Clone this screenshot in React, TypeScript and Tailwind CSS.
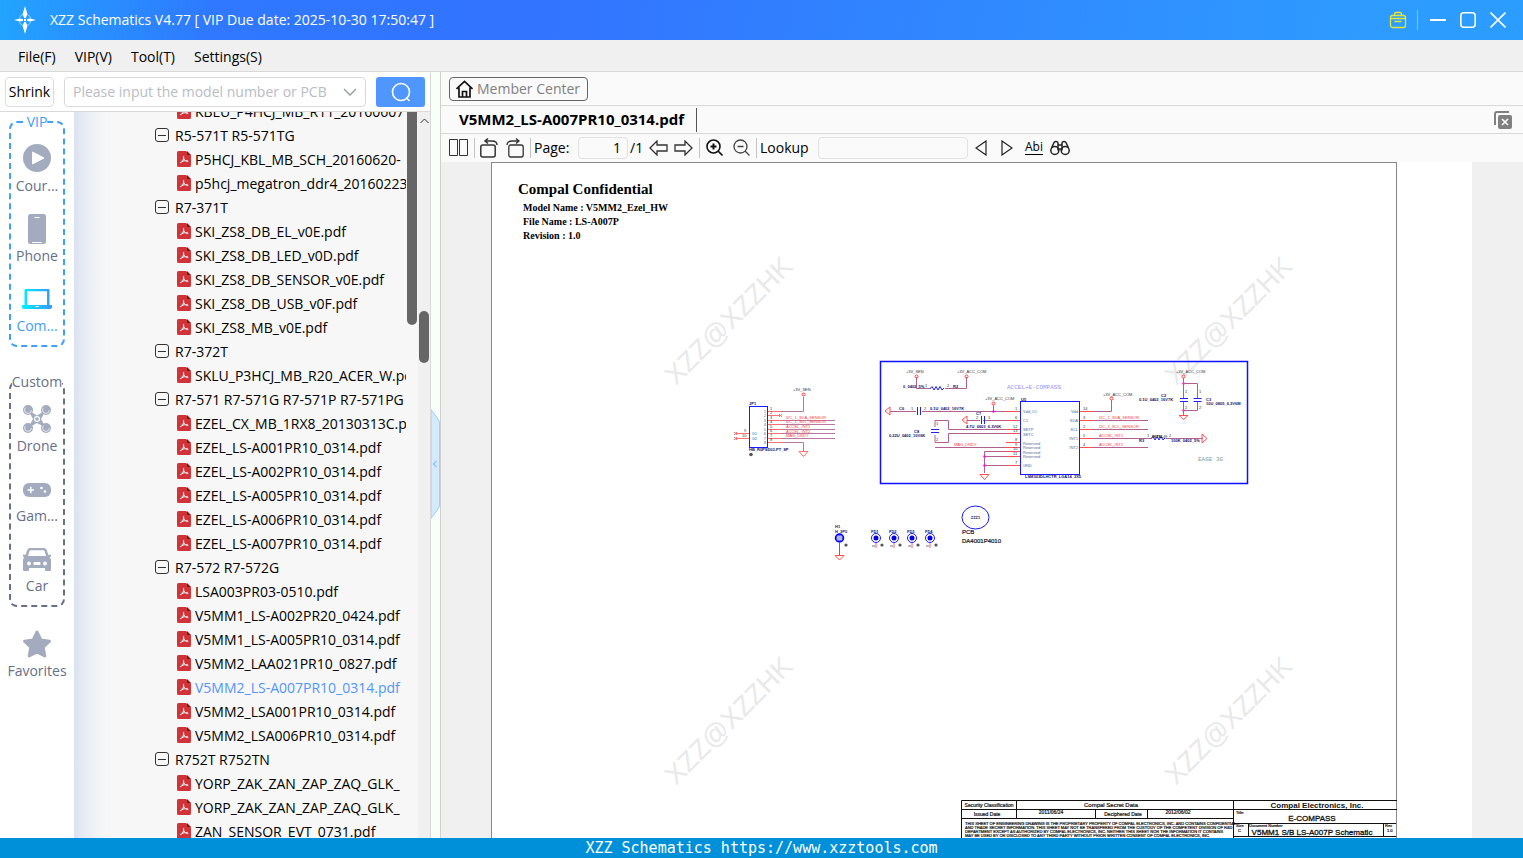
import React from 'react';

type TreeRow = { kind: 'group' | 'file'; label: string; active?: boolean };

const TREE: TreeRow[] = [
  { kind: 'file', label: 'KBLU_P4HCJ_MB_R11_20160607' },
  { kind: 'group', label: 'R5-571T R5-571TG' },
  { kind: 'file', label: 'P5HCJ_KBL_MB_SCH_20160620-' },
  { kind: 'file', label: 'p5hcj_megatron_ddr4_20160223' },
  { kind: 'group', label: 'R7-371T' },
  { kind: 'file', label: 'SKI_ZS8_DB_EL_v0E.pdf' },
  { kind: 'file', label: 'SKI_ZS8_DB_LED_v0D.pdf' },
  { kind: 'file', label: 'SKI_ZS8_DB_SENSOR_v0E.pdf' },
  { kind: 'file', label: 'SKI_ZS8_DB_USB_v0F.pdf' },
  { kind: 'file', label: 'SKI_ZS8_MB_v0E.pdf' },
  { kind: 'group', label: 'R7-372T' },
  { kind: 'file', label: 'SKLU_P3HCJ_MB_R20_ACER_W.pdf' },
  { kind: 'group', label: 'R7-571 R7-571G R7-571P R7-571PG' },
  { kind: 'file', label: 'EZEL_CX_MB_1RX8_20130313C.pdf' },
  { kind: 'file', label: 'EZEL_LS-A001PR10_0314.pdf' },
  { kind: 'file', label: 'EZEL_LS-A002PR10_0314.pdf' },
  { kind: 'file', label: 'EZEL_LS-A005PR10_0314.pdf' },
  { kind: 'file', label: 'EZEL_LS-A006PR10_0314.pdf' },
  { kind: 'file', label: 'EZEL_LS-A007PR10_0314.pdf' },
  { kind: 'group', label: 'R7-572 R7-572G' },
  { kind: 'file', label: 'LSA003PR03-0510.pdf' },
  { kind: 'file', label: 'V5MM1_LS-A002PR20_0424.pdf' },
  { kind: 'file', label: 'V5MM1_LS-A005PR10_0314.pdf' },
  { kind: 'file', label: 'V5MM2_LAA021PR10_0827.pdf' },
  { kind: 'file', label: 'V5MM2_LS-A007PR10_0314.pdf', active: true },
  { kind: 'file', label: 'V5MM2_LSA001PR10_0314.pdf' },
  { kind: 'file', label: 'V5MM2_LSA006PR10_0314.pdf' },
  { kind: 'group', label: 'R752T R752TN' },
  { kind: 'file', label: 'YORP_ZAK_ZAN_ZAP_ZAQ_GLK_' },
  { kind: 'file', label: 'YORP_ZAK_ZAN_ZAP_ZAQ_GLK_' },
  { kind: 'file', label: 'ZAN_SENSOR_EVT_0731.pdf' },
];

const MENUS = ['File(F)', 'VIP(V)', 'Tool(T)', 'Settings(S)'];

/* ---------- icons ---------- */

const Logo = () => (
  <svg width="24" height="30" viewBox="0 0 24 30" fill="#fff">
    <circle cx="12" cy="15" r="6" fill="none" stroke="#fff" strokeOpacity="0.5" strokeDasharray="6 3.4" strokeDashoffset="-1.7" />
    <path d="M12 1l2.4 8-1.6 4h-1.6l-1.6-4z" />
    <path d="M12 29l2.4-8-1.6-4h-1.6l-1.6 4z" />
    <path d="M1 15l6-1.6 3 .8v1.6l-3 .8z" />
    <path d="M23 15l-6-1.6-3 .8v1.6l3 .8z" />
    <circle cx="12" cy="15" r="1.2" />
  </svg>
);

const PdfIcon = () => (
  <svg className="shrink-0" width="14" height="16" viewBox="0 0 14 16">
    <path d="M1.5 0H9l5 4.5v10a1.5 1.5 0 0 1-1.5 1.5h-11A1.5 1.5 0 0 1 0 14.500V1.500A1.500 1.500 0 0 1 1.500 0z" fill="#d13438" />
    <path d="M10 0l4 4h-4z" fill="#8c1014" />
    <path d="M6.700 5.500c.2 3-1 5-3.200 6.200M7 7.800c.7 1.500 2 2.400 3.800 2.700M4.500 10.600c2-1 4-1.200 6.200-.6" fill="none" stroke="#fff" strokeLinecap="round" />
  </svg>
);

const MinusBox = () => (
  <svg className="shrink-0" width="14" height="14" viewBox="0 0 14 14" fill="none" stroke="#333">
    <rect x="0.500" y="0.500" width="13" height="13" rx="2.500" />
    <path d="M3 7.500h8" />
  </svg>
);

const CourseIcon = () => (
  <svg width="32" height="32" viewBox="0 0 32 32">
    <circle cx="16" cy="16" r="14" fill="#a3abbe" />
    <path d="M11.500 10v12l11.500-6z" fill="#fff" stroke="#fff" strokeLinejoin="round" />
  </svg>
);

const PhoneIcon = () => (
  <svg width="32" height="32" viewBox="0 0 32 32">
    <rect x="7" y="2" width="18" height="30" rx="2.500" fill="#a3abbe" />
    <path d="M14 5.500h4M11.500 30.500h9" stroke="#fff" strokeWidth="1.200" strokeLinecap="round" />
  </svg>
);

const LaptopIcon = () => (
  <svg width="32" height="32" viewBox="0 0 32 32">
    <defs>
      <linearGradient id="lap" x1="0" x2="1">
        <stop offset="0" stopColor="#00f0ff" />
        <stop offset="1" stopColor="#3399ff" />
      </linearGradient>
    </defs>
    <path fillRule="evenodd" fill="url(#lap)" d="M4.500 7h23a1 1 0 0 1 1 1v15H31v2a2 2 0 0 1-2 2H3a2 2 0 0 1-2-2v-2h2.500V8a1 1 0 0 1 1-1zM6 9.200V23h20V9.200z" />
    <path d="M14 24.500h4" stroke="#fff" />
  </svg>
);

const DroneIcon = () => (
  <svg width="32" height="32" viewBox="0 0 32 32" fill="#a3abbe">
    <path d="M7 8l9 5.500L25 8l-5 9 5 9-9-5-9 5 5-9z" />
    {[[7, 8], [25, 8], [7, 26], [25, 26]].map(([x, y]) => (
      <g key={`${x}-${y}`}>
        <circle cx={x} cy={y} r="5" />
        <circle cx={x} cy={y} r="3.400" fill="none" stroke="#fff" strokeWidth="0.700" strokeDasharray="13 8" />
      </g>
    ))}
    <circle cx="16" cy="17" r="2.400" fill="none" stroke="#fff" strokeWidth="1.200" />
  </svg>
);

const GameIcon = () => (
  <svg width="32" height="32" viewBox="0 0 32 32">
    <rect x="2" y="11" width="28" height="14" rx="6" fill="#a3abbe" />
    <path d="M6.500 18h6.500M9.800 14.800v6.500" stroke="#fff" strokeWidth="1.600" />
    <circle cx="20.500" cy="16" r="1.300" fill="#fff" />
    <circle cx="24" cy="19.500" r="1.300" fill="#fff" />
  </svg>
);

const CarIcon = () => (
  <svg width="32" height="32" viewBox="0 0 32 32">
    <path d="M9 6h14a3 3 0 0 1 2.700 2l1.800 5 2.500-.5v2l-1.200.7c.8 1 1.200 2 1.200 3V28a1 1 0 0 1-1 1h-4a1 1 0 0 1-1-1v-2H8v2a1 1 0 0 1-1 1H3a1 1 0 0 1-1-1v-9.800c0-1 .4-2 1.200-3L2 14.500v-2l2.500.5 1.800-5A3 3 0 0 1 9 6z" fill="#a3abbe" />
    <path d="M9.500 8.200h13a1 1 0 0 1 1 .7l1.600 5.100H7l1.500-5.100a1 1 0 0 1 1-.7z" fill="#fff" />
    <circle cx="8" cy="21.500" r="1.900" fill="#fff" />
    <circle cx="24" cy="21.500" r="1.900" fill="#fff" />
    <rect x="12.500" y="20" width="7" height="3" rx="1" fill="#fff" />
  </svg>
);

const StarIcon = () => (
  <svg width="32" height="32" viewBox="0 0 32 32">
    <path d="M16 5l3.800 8 8.700 1.200-6.300 6 1.600 8.800L16 24.900 8.200 29l1.600-8.800-6.300-6L12.200 13z" fill="#a3abbe" stroke="#a3abbe" strokeWidth="3" strokeLinejoin="round" />
  </svg>
);

/* ---------- small pieces ---------- */

const SideItem: React.FC<{ label: string; icon: React.ReactNode; active?: boolean }> = ({ label, icon, active }) => (
  <button className={`flex flex-col items-center w-full h-[70px] text-sm leading-6 ${active ? 'text-[#409eff]' : 'text-[#66708a]'}`}>
    {icon}
    <span>{label}</span>
  </button>
);

const Divider = () => <div className="ml-1.5 w-px h-5 shrink-0 bg-[#c4c4c4]" />;

/* ---------- schematic sheet ---------- */

type Label = [number, number, string];

const Labels: React.FC<{ items: Label[]; fill: string; size?: number; bold?: boolean; anchor?: 'start' | 'middle' | 'end' }> = ({
  items,
  fill,
  size = 4,
  bold,
  anchor = 'start',
}) => (
  <g fill={fill} fontSize={size} fontWeight={bold ? 700 : 400} textAnchor={anchor}>
    {items.map(([x, y, text], i) => (
      <text key={i} x={x} y={y}>{text}</text>
    ))}
  </g>
);

const Sheet = () => (
  <svg className="block absolute -left-px -top-px" width="906" height="676" viewBox="491 162 906 676" fill="none" fontFamily="'Liberation Sans', Arial, sans-serif" fontWeight="400">
    {/* watermarks */}
    <g fill="#e9e9ea" fontSize="27" textAnchor="middle">
      {[[735, 327], [1235, 327], [735, 727], [1235, 727]].map(([x, y]) => (
        <text key={`${x}-${y}`} transform={`translate(${x} ${y}) rotate(-45)`}>XZZ@XZZHK</text>
      ))}
    </g>

    {/* JP1 connector */}
    <rect x="749.500" y="406.500" width="18" height="41" stroke="#1a1aff" />
    <path d="M781 411.500h22.500V397M781 420.500h54M781 424.500h54M781 429.500h54M781 433.500h54M781 438.500h54M781 442.500h22.500V451" stroke="#b878a0" />
    <path d="M768 411.500h13M768 415.500h13M768 420.500h13M768 424.500h13M768 429.500h13M768 433.500h13M768 438.500h13M768 442.500h13M735 433.500h14M735 438.500h14M799 451.500h9l-4.500 5zM779 414l3 3m0-3l-3 3M734 432l3 3m0-3l-3 3M734 437l3 3m0-3l-3 3" stroke="#ff7070" />
    <circle cx="803.500" cy="394.500" r="1.500" stroke="#ff4040" />
    <Labels fill="#333" items={[[793, 391, '+3V_SEN'], [770, 410, '1'], [770, 414, '2'], [770, 419, '3'], [770, 423, '4'], [770, 428, '5'], [770, 432, '6'], [770, 437, '7'], [770, 441, '8'], [744, 432, '9'], [742, 437, '10']]} />
    <Labels fill="#3a6ea5" anchor="end" items={[[766, 413, '1'], [766, 417, '2'], [766, 422, '3'], [766, 426, '4'], [766, 431, '5'], [766, 435, '6'], [766, 440, '7'], [766, 444, '8'], [757, 435, 'G1'], [757, 440, 'G2']]} />
    <Labels fill="#ff3c3c" items={[[786, 419, 'I2C_1_SDA_SENSOR'], [786, 423, 'I2C_1_SCL_SENSOR'], [786, 428, 'ACCEL_INT1'], [786, 433, 'ACCEL_INT2'], [786, 437, 'MAG_DRDY']]} />
    <Labels fill="#10106e" bold items={[[749, 405, 'JP1'], [749, 451, 'HB_R0PSD03-PT_8P']]} />
    <circle cx="751" cy="454.500" r="1.800" fill="#555" />

    {/* e-compass block */}
    <rect x="880.500" y="361.500" width="367" height="122" stroke="#1010ff" strokeWidth="1.500" />
    <rect x="1020.500" y="401.500" width="59" height="73" stroke="#1a1aff" />
    <path d="M916.500 377v11.500H931M945 388.500h21.500V377M890 411.500h26M922 411.500h84M993.500 405v6M983 420.500h23M967 420.500h13M935 427v-6.500h13.500v9H1006M935 435v7.500h13.500v-9H1006M935 447.500h71M984.500 473v-21.500H1006M984.500 456.500H1006M984.500 465.500H1006" stroke="#b06090" />
    <path d="M1006 411.500h14M1006 420.500h14M1006 429.500h14M1006 433.500h14M1006 442.500h14M1006 447.500h14M1006 451.500h14M1006 456.500h14M1006 465.500h14M885 411l5-4v8zM962 420l5-4v8zM980 474.500h9l-4.500 5z" stroke="#ff5050" />
    <path d="M930 388.500l2-2 2 3.500 2-3.500 2 3.500 2-3.500 2 3.500 2-2" stroke="#2020ff" />
    <path d="M917.500 407v8M920.500 407v8M981.500 416v8M984.500 416v8M931 429.500h8M931 432.500h8" stroke="#2020ff" />
    <g stroke="#ff4040">
      <circle cx="916.500" cy="376.500" r="1.500" />
      <circle cx="966.500" cy="376.500" r="1.500" />
      <circle cx="993.500" cy="403.500" r="1.500" />
      <circle cx="1111.500" cy="398.500" r="1.500" />
      <circle cx="1183.500" cy="376.500" r="1.500" />
    </g>
    <g fill="#ff00ff">
      <circle cx="993.500" cy="411.500" r="1.200" />
      <circle cx="984.500" cy="456.500" r="1.200" />
      <circle cx="984.500" cy="465.500" r="1.200" />
      <circle cx="1183.500" cy="383.500" r="1.200" />
      <circle cx="1183.500" cy="410.500" r="1.200" />
    </g>
    <path d="M1093 411.500h18.500V400M1093 420.500h55M1093 429.500h55M1093 438.500h59M1166 438.500h37M1093 447.500h55M1183.500 378v20M1183.500 401v14M1183.500 383.500h14V398M1197.500 401v9.500h-14" stroke="#b06090" />
    <path d="M1080 411.500h13M1080 420.500h13M1080 429.500h13M1080 438.500h13M1080 447.500h13M1202 434v9l5-4.500zM1179 415.500h9l-4.500 4z" stroke="#ff5050" />
    <path d="M1180 398.500h8M1180 401.500h8M1193.500 398.500h8M1193.500 401.500h8" stroke="#2020ff" />
    <path d="M1151 438.500l2-2 2 3.500 2-3.500 2 3.500 2-3.500 2 3.500 2-2" stroke="#2020ff" />
    <Labels fill="#333" items={[[906, 373, '+3V_SEN'], [957, 373, '+3V_ACC_COM'], [985, 400, '+3V_ACC_COM'], [1103, 396, '+3V_ACC_COM'], [1176, 373, '+3V_ACC_COM'], [925, 387, '1'], [947, 387, '2'], [911, 410, '1'], [924, 410, '2'], [976, 419, '2'], [988, 419, '1'], [936, 425, '1'], [936, 441, '2'], [1015, 410, '1'], [1015, 419, '6'], [1013, 428, '12'], [1013, 432, '13'], [1015, 441, '8'], [1015, 446, '9'], [1013, 450, '10'], [1013, 455, '11'], [1015, 464, '7'], [1083, 410, '14'], [1083, 419, '3'], [1083, 428, '2'], [1083, 437, '5'], [1083, 446, '4'], [1147, 437, '1'], [1169, 437, '2'], [1185, 393, '1'], [1199, 393, '1'], [1185, 409, '2'], [1199, 409, '2']]} />
    <Labels fill="#3a6ea5" items={[[1023, 413, 'Vdd_IO'], [1023, 422, 'C1'], [1023, 431, 'SETP'], [1023, 436, 'SETC'], [1023, 445, 'Reserved'], [1023, 449, 'Reserved'], [1023, 454, 'Reserved'], [1023, 458, 'Reserved'], [1023, 467, 'GND']]} />
    <Labels fill="#3a6ea5" anchor="end" items={[[1078, 413, 'Vdd'], [1078, 422, 'SDA'], [1078, 431, 'SCL'], [1078, 440, 'INT1'], [1078, 449, 'INT2']]} />
    <Labels fill="#ff3c3c" items={[[954, 446, 'MAG_DRDY'], [1099, 419, 'I2C_1_SDA_SENSOR'], [1099, 428, 'I2C_1_SCL_SENSOR'], [1099, 437, 'ACCEL_INT1'], [1099, 446, 'ACCEL_INT2']]} />
    <Labels fill="#10106e" bold items={[[903, 388, '0_0402_5%'], [953, 388, 'R2'], [899, 410, 'C6'], [930, 410, '0.1U_0402_16V7K'], [976, 415, 'C7'], [966, 428, '4.7U_0603_6.3V6K'], [914, 433, 'C8'], [889, 437, '0.22U_0402_10V6K'], [1021, 401, 'U5'], [1025, 478, 'LSM303DLHCTR_LGA14_3X5'], [1161, 397, 'C2'], [1139, 401, '0.1U_0402_16V7K'], [1206, 401, 'C3'], [1206, 405, '10U_0805_6.3V6M'], [1139, 442, 'R3'], [1171, 442, '100K_0402_5%']]} />
    <Labels fill="#111" bold items={[[1152, 438, 'INTEL@']]} />
    <g fontFamily="'Liberation Mono', monospace">
      <Labels fill="#9494ff" size={6} items={[[1007, 389, 'ACCEL+E-COMPASS']]} />
      <Labels fill="#7f9c9c" size={6} items={[[1198, 461, 'EAGE 3G']]} />
    </g>

    {/* mounting hole and fiducials */}
    <path d="M839.500 543v12" stroke="#a8507c" />
    <path d="M835 555.500h9l-4.500 4.500z" stroke="#ff5050" />
    <circle cx="839.500" cy="538" r="4" fill="#6a6aff" stroke="#0000ff" strokeWidth="1.500" />
    <path d="M837 537h5M837 539h5" stroke="#fff" />
    {[876, 894, 912, 930].map((x, i) => (
      <g key={x}>
        <circle cx={x} cy="538" r="4.500" stroke="#1a1aff" />
        <circle cx={x} cy="538" r="2.500" fill="#0000e0" />
        <path d={`M${x} 543v5`} stroke="#ff6060" />
        <path d={`M${x - 4} 546h3`} stroke="#777" />
        <circle cx={x + 6} cy="545" r="1.600" fill="#555" />
        <text x={x - 5} y="533" fontSize="4" fontWeight="700" fill="#10106e">{`FD${i + 1}`}</text>
      </g>
    ))}
    <circle cx="846" cy="545" r="1.600" fill="#555" />
    <Labels fill="#10106e" bold items={[[835, 528, 'H1'], [835, 533, 'H_3P0']]} />
    <ellipse cx="975.500" cy="517.500" rx="13.500" ry="11.500" stroke="#1a1aff" />
    <Labels fill="#10106e" bold anchor="middle" items={[[975.500, 519, 'ZZZ1']]} />
    <g stroke="#111" strokeWidth="0.200">
      <Labels fill="#10106e" size={6} items={[[962, 534, 'PCB']]} />
      <Labels fill="#111" size={6} items={[[962, 543, 'DA4001P4010']]} />
    </g>

    {/* title block */}
    <path d="M961.500 838V800.500H1397M961.500 809.500H1397M961.500 818.500H1233M1016.500 800v18M1095.500 809v9M1147.500 809v9M1233.500 800v38M1233 823.500h163M1248.500 823v13M1383.500 823v13M1233 836.500h163" stroke="#111" />
    <g fill="#111">
      <g fontSize="5" textAnchor="middle" stroke="#111" strokeWidth="0.200">
        <text x="989" y="807">Security Classification</text>
        <text x="987" y="816">Issued Date</text>
        <text x="1111" y="807" fontSize="6">Compal Secret Data</text>
        <text x="1051" y="814">2011/06/24</text>
        <text x="1123" y="816">Deciphered Date</text>
        <text x="1178" y="814">2012/06/02</text>
      </g>
      <g fontSize="4" stroke="#111" strokeWidth="0.200">
        <text x="965" y="825">THIS SHEET OF ENGINEERING DRAWING IS THE PROPRIETARY PROPERTY OF COMPAL ELECTRONICS, INC. AND CONTAINS CONFIDENTIAL</text>
        <text x="965" y="829">AND TRADE SECRET INFORMATION. THIS SHEET MAY NOT BE TRANSFERED FROM THE CUSTODY OF THE COMPETENT DIVISION OF R&amp;D</text>
        <text x="965" y="833">DEPARTMENT EXCEPT AS AUTHORIZED BY COMPAL ELECTRONICS, INC. NEITHER THIS SHEET NOR THE INFORMATION IT CONTAINS</text>
        <text x="965" y="837">MAY BE USED BY OR DISCLOSED TO ANY THIRD PARTY WITHOUT PRIOR WRITTEN CONSENT OF COMPAL ELECTRONICS, INC.</text>
        <text x="1236" y="814">Title</text>
        <text x="1236" y="827">Size</text>
        <text x="1238" y="832">C</text>
        <text x="1249" y="827">Document Number</text>
        <text x="1385" y="827">Rev</text>
        <text x="1387" y="832">1.0</text>
      </g>
      <g fontSize="8" textAnchor="middle">
        <text x="1317" y="808" fontWeight="700">Compal Electronics, Inc.</text>
        <text x="1312" y="821" stroke="#111" strokeWidth="0.300">E-COMPASS</text>
        <text x="1312" y="835" stroke="#111" strokeWidth="0.300">V5MM1 S/B LS-A007P Schematic</text>
      </g>
    </g>
  </svg>
);

/* ---------- page sections ---------- */

const TitleBar = () => (
  <header className="flex items-center h-10 shrink-0 pl-[13px] pr-[17px] text-white bg-[linear-gradient(100deg,#22a4ff_0%,#2f78ff_14%,#3273ff_35%,#2e9bff_90%,#2b9dff_100%)]">
    <Logo />
    <h1 className="ml-[13px] text-sm">XZZ Schematics V4.77 [ VIP Due date: 2025-10-30 17:50:47 ]</h1>
    <div className="ml-auto flex items-center">
      <button aria-label="Toolbox">
        <svg width="18" height="18" viewBox="0 0 18 18" fill="none" stroke="#e3e838" strokeWidth="1.300">
          <rect x="1.500" y="4.500" width="15" height="12" rx="2" />
          <path d="M5.500 4.500V3a1.500 1.500 0 0 1 1.500-1.500h4A1.500 1.500 0 0 1 12.500 3v1.500M2 7.500h14M5.500 10.500h7" />
        </svg>
      </button>
      <span className="w-px h-5 ml-2.5 mr-3 bg-white/40" />
      <button aria-label="Minimize">
        <svg width="16" height="18" viewBox="0 0 16 18" stroke="#fff" strokeWidth="2"><path d="M0 9h16" /></svg>
      </button>
      <button aria-label="Maximize" className="ml-3.5">
        <svg width="16" height="18" viewBox="0 0 16 18" fill="none" stroke="#fff" strokeWidth="1.600"><rect x="0.800" y="1.800" width="14.400" height="14.400" rx="3" /></svg>
      </button>
      <button aria-label="Close" className="ml-3.5">
        <svg width="16" height="18" viewBox="0 0 16 18" stroke="#fff" strokeWidth="1.600"><path d="M0.500 1.500l15 15M15.500 1.500l-15 15" /></svg>
      </button>
    </div>
  </header>
);

const SearchRow = () => (
  <div className="flex items-center h-10 shrink-0 px-[5px] bg-white border-b border-[#d9d9d9]">
    <button className="w-[49px] h-[30px] pt-px border border-[#dcdcdc] rounded text-sm text-black">Shrink</button>
    <div className="flex items-center ml-2.5 flex-1 h-[30px] px-2 border border-[#d9d9d9] rounded">
      <input aria-label="Model number or PCB" className="w-full min-w-0 pt-px text-sm outline-none placeholder:text-[#b8bcc4]" placeholder="Please input the model number or PCB" />
      <button aria-label="Show history">
        <svg width="14" height="8" viewBox="0 0 14 8" fill="none" stroke="#9aa0a8" strokeWidth="1.500"><path d="M1 1l6 6 6-6" /></svg>
      </button>
    </div>
    <button aria-label="Search" className="flex items-center justify-center ml-2.5 w-[49px] h-[30px] rounded-[3px] bg-[#5096ff]">
      <svg width="20" height="20" viewBox="0 0 20 20" fill="none" stroke="#fff" strokeWidth="1.600" strokeLinecap="round">
        <circle cx="10" cy="10" r="8.500" />
        <path d="M15.500 16l2.500 2.500" />
      </svg>
    </button>
  </div>
);

const Sidebar = () => (
  <nav className="w-[74px] shrink-0 bg-white px-[9px]">
    <fieldset className="h-[235px] border-2 border-dashed border-[#409eff] rounded-lg">
      <legend className="mx-auto text-sm leading-5 text-[#409eff]">VIP</legend>
      <div className="pt-2.5">
        <SideItem label="Cour..." icon={<CourseIcon />} />
        <SideItem label="Phone" icon={<PhoneIcon />} />
        <SideItem label="Com..." icon={<LaptopIcon />} active />
      </div>
    </fieldset>
    <fieldset className="mt-[25px] h-[235px] border-2 border-dashed border-[#66708a] rounded-lg">
      <legend className="mx-auto text-sm leading-5 text-[#66708a]">Custom</legend>
      <div className="pt-2.5">
        <SideItem label="Drone" icon={<DroneIcon />} />
        <SideItem label="Gam..." icon={<GameIcon />} />
        <SideItem label="Car" icon={<CarIcon />} />
      </div>
    </fieldset>
    <div className="mt-5">
      <SideItem label="Favorites" icon={<StarIcon />} />
    </div>
  </nav>
);

const FileTree = () => (
  <div className="flex flex-1 min-w-0 overflow-hidden bg-[linear-gradient(90deg,#dbe3f1_0px,#e9edf4_12px,#f7f7f7_32px)]">
    <ul className="flex-1 min-w-0 overflow-hidden -mt-[13px] mr-px text-sm">
      {TREE.map((row, i) => (
        <li key={i}>
          <button
            className={`flex items-center h-6 w-full whitespace-nowrap ${row.kind === 'group' ? 'gap-1.5 pl-[81px]' : 'gap-1 pl-[103px]'} ${row.active ? 'text-[#5096ff]' : 'text-black'}`}
          >
            {row.kind === 'group' ? <MinusBox /> : <PdfIcon />}
            <span className="pt-0.5">{row.label}</span>
          </button>
        </li>
      ))}
    </ul>
    <div className="w-[11px] shrink-0">
      <div className="w-2.5 h-[213px] rounded-b-full bg-[#666]" />
    </div>
    <div className="flex flex-col items-center w-3 shrink-0 bg-[#f0f0f0]">
      <svg className="mt-1.5" width="9" height="6" viewBox="0 0 9 6" fill="none" stroke="#333"><path d="M0.500 5l4-4 4 4" /></svg>
      <div className="mt-[187px] w-2.5 h-[52px] rounded-full bg-[#666]" />
    </div>
  </div>
);

const Toolbar = () => (
  <div className="flex items-center h-7 shrink-0 pl-2 pb-px bg-[#fafafa] text-sm text-black">
    <button aria-label="Two pages">
      <svg width="19" height="18" viewBox="0 0 19 18" fill="none" stroke="#333"><path d="M0.500 0.500h8v16h-8zM10.500 0.500h8v16h-8z" /></svg>
    </button>
    <Divider />
    <button aria-label="Rotate left" className="ml-[5px]">
      <svg width="18" height="20" viewBox="0 0 18 20" fill="none" stroke="#333" strokeWidth="1.500">
        <rect x="0.800" y="7" width="14.400" height="12" rx="2" />
        <path d="M17 7c0-2.500-2-4-5-4H5M8 0.500L5 3l3 2.500" />
      </svg>
    </button>
    <button aria-label="Rotate right" className="ml-2">
      <svg width="18" height="20" viewBox="0 0 18 20" fill="none" stroke="#333" strokeWidth="1.300">
        <rect x="2.800" y="7" width="14.400" height="12" rx="2" />
        <path d="M1 7c0-2.500 2-4 5-4h7M10 0.500L13 3l-3 2.500" />
      </svg>
    </button>
    <Divider />
    <label htmlFor="page" className="ml-[3px] w-11">Page:</label>
    <input id="page" defaultValue="1" className="w-[50px] h-[22px] px-1.5 text-right border border-[#e2e2e2] rounded-sm bg-[#fafafa]" />
    <span className="ml-0.5 w-[15px]">/1</span>
    <button aria-label="Previous page" className="ml-1">
      <svg width="19" height="16" viewBox="0 0 19 16" fill="none" stroke="#333" strokeWidth="1.300"><path d="M1 8l7-7v4h10v6H8v4z" /></svg>
    </button>
    <button aria-label="Next page" className="ml-1.5">
      <svg width="19" height="16" viewBox="0 0 19 16" fill="none" stroke="#333" strokeWidth="1.300"><path d="M18 8l-7-7v4H1v6h10v4z" /></svg>
    </button>
    <Divider />
    <button aria-label="Zoom in" className="ml-1.5">
      <svg width="17" height="17" viewBox="0 0 17 17" fill="none" stroke="#111" strokeWidth="1.600"><circle cx="7.500" cy="7.500" r="6.500" /><path d="M12 12l4.500 4.500" /><path d="M4.500 7.500h6M7.500 4.500v6" strokeWidth="2" /></svg>
    </button>
    <button aria-label="Zoom out" className="ml-2.5">
      <svg width="17" height="17" viewBox="0 0 17 17" fill="none" stroke="#444" strokeWidth="1.300"><circle cx="7.500" cy="7.500" r="6.500" /><path d="M12 12l4.500 4.500M4.500 7.500h6" /></svg>
    </button>
    <Divider />
    <label htmlFor="lookup" className="ml-[3px] w-[58px]">Lookup</label>
    <input id="lookup" className="w-[150px] h-[22px] px-1.5 border border-[#e2e2e2] rounded-sm bg-[#fafafa]" />
    <button aria-label="Find previous" className="ml-[7px]">
      <svg width="12" height="16" viewBox="0 0 12 16" fill="none" stroke="#222" strokeWidth="1.200"><path d="M11 1v14L1 8z" /></svg>
    </button>
    <button aria-label="Find next" className="ml-3.5">
      <svg width="12" height="16" viewBox="0 0 12 16" fill="none" stroke="#222" strokeWidth="1.200"><path d="M1 1v14l10-7z" /></svg>
    </button>
    <button aria-label="Whole word" className="ml-3 text-xs leading-3 border-b border-black h-[15px] font-medium">Abi</button>
    <button aria-label="Search in file" className="ml-[7px]">
      <svg width="20" height="16" viewBox="0 0 20 16" fill="none" stroke="#222" strokeWidth="1.500">
        <circle cx="4.800" cy="10.500" r="4" />
        <circle cx="15.200" cy="10.500" r="4" />
        <path d="M1.500 8L4 2.500C4.500 1 8 1 8 3v7.500M18.500 8L16 2.500C15.500 1 12 1 12 3v7.500M8 5h4M8 9h4" />
      </svg>
    </button>
  </div>
);

const Viewer = () => (
  <main className="flex flex-col flex-1 min-w-0 border-l border-[#d0d0d0] bg-[#f0f0f0]">
    <div className="flex items-center h-[34px] shrink-0 pl-2 bg-[#fafafa] border-b border-[#d9d9d9]">
      <button className="flex items-center w-[139px] h-6 pl-1.5 gap-1 border border-[#666] rounded text-sm whitespace-nowrap text-[#808080]">
        <svg className="shrink-0" width="17" height="18" viewBox="0 0 17 18" fill="none" stroke="#111" strokeWidth="1.700"><path d="M0.500 9L8.500 1.500l8 7.500M3 7.500V17h11V7.500M6.500 17v-5.500h4V17" /></svg>
        Member Center
      </button>
    </div>
    <div className="flex items-center h-7 shrink-0 pl-[18px] pr-[11px] bg-[#fafafa] border-b border-[#d9d9d9]">
      <button className="h-6 pr-3 border-r border-[#555] text-[15px] font-bold text-black">V5MM2_LS-A007PR10_0314.pdf</button>
      <button aria-label="Close all" className="ml-auto">
        <svg width="18" height="18" viewBox="0 0 18 18">
          <path d="M1 14V3a2 2 0 0 1 2-2h12" fill="none" stroke="#808080" strokeWidth="2" />
          <rect x="4" y="4" width="14" height="14" rx="2" fill="#808080" />
          <path d="M8 8l6 6M14 8l-6 6" stroke="#fff" strokeWidth="1.600" />
        </svg>
      </button>
    </div>
    <Toolbar />
    <div className="flex flex-1 min-h-0 pl-[50px] pr-[51px] overflow-hidden">
      <div className="flex-1 min-w-0 bg-white overflow-hidden">
        <article className="relative w-[906px] h-full border border-b-0 border-[#888] font-['Liberation_Serif',serif] font-bold text-black">
          <div className="pl-[26px] pt-4">
            <h2 className="text-[15px] leading-5">Compal Confidential</h2>
            <div className="pl-[5px] pt-0.5 text-[10px] leading-[14px]">
              <p>Model Name : V5MM2_Ezel_HW</p>
              <p>File Name : LS-A007P</p>
              <p>Revision : 1.0</p>
            </div>
          </div>
          <Sheet />
        </article>
      </div>
    </div>
  </main>
);

const App: React.FC = () => (
  <div className="flex flex-col h-screen overflow-hidden font-['Open_Sans','Noto_Sans',sans-serif]">
    <TitleBar />
    <nav className="flex items-center gap-[19px] h-8 shrink-0 pl-[18px] pt-0.5 bg-[#f0f0f0] border-b border-[#d9d9d9] text-sm text-black">
      {MENUS.map((m) => (
        <button key={m}>{m}</button>
      ))}
    </nav>
    <div className="flex flex-1 min-h-0">
      <aside className="flex flex-col w-[431px] shrink-0 border-r border-[#d9d9d9]">
        <SearchRow />
        <div className="flex flex-1 min-h-0 overflow-hidden">
          <Sidebar />
          <FileTree />
        </div>
      </aside>
      <div className="flex items-center w-[9px] shrink-0 pt-[18px] bg-[#f8fff8]">
        <button aria-label="Collapse panel">
          <svg width="9" height="110" viewBox="0 0 9 110" fill="none">
            <path d="M0 0.500L7 10q1.500 2 1.500 4v82q0 2-1.500 4L0 109.500z" fill="#d6eaff" stroke="#9fd0fb" />
            <path d="M5.500 52L2.500 55l3 3" stroke="#4aa8f5" />
          </svg>
        </button>
      </div>
      <Viewer />
    </div>
    <footer className="flex items-center justify-center h-5 shrink-0 bg-[#0090d9] text-white text-[15px] font-['DejaVu_Sans_Mono',monospace]">
      XZZ Schematics https://www.xzztools.com
    </footer>
  </div>
);

export default App;
